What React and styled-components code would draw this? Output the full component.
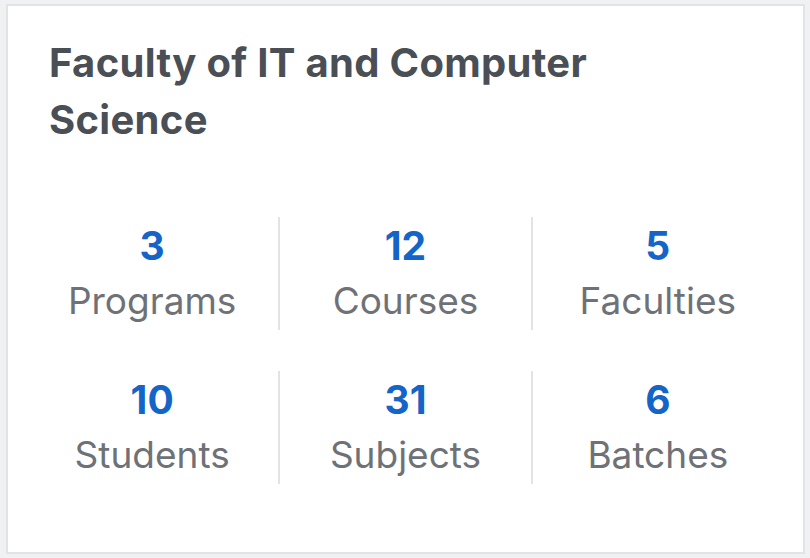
import styled, { createGlobalStyle } from "styled-components";

const GlobalStyle = createGlobalStyle`
  html, body {
    margin: 0;
    padding: 0;
    background: #eff1f3;
  }
  body {
    font-family: Inter, "Noto Sans", sans-serif;
  }
`;

const Page = styled.div`
  width: 810px;
  height: 558px;
  box-sizing: border-box;
  padding: 4px 5px 4px 6px;
`;

const Card = styled.div`
  height: 100%;
  box-sizing: border-box;
  background: #fff;
  border: 2px solid #e0e3e7;
  padding: 28px 20px 0 18px;
`;

const Title = styled.h2`
  margin: 0 0 0 23px;
  font-size: 40px;
  line-height: 57px;
  font-weight: 700;
  letter-spacing: 0.3px;
  color: #4a4f56;
  max-width: 600px;
`;

const StatsGrid = styled.div`
  display: grid;
  grid-template-columns: repeat(3, 1fr);
  row-gap: 41px;
  margin-top: 69px;
`;

const Stat = styled.div`
  display: flex;
  flex-direction: column;
  align-items: center;
  height: 113px;
  border-left: ${(p) => (p.$first ? "none" : "2px solid #e1e3e7")};
`;

const Value = styled.div`
  margin-top: 6px;
  font-size: 39px;
  line-height: 46px;
  font-weight: 700;
  color: #1565c8;
`;

const Label = styled.div`
  margin-top: 10px;
  font-size: 37px;
  line-height: 44px;
  color: #6e7277;
`;

const stats = [
  { value: 3, label: "Programs" },
  { value: 12, label: "Courses" },
  { value: 5, label: "Faculties" },
  { value: 10, label: "Students" },
  { value: 31, label: "Subjects" },
  { value: 6, label: "Batches" },
];

export default function App() {
  return (
    <>
      <GlobalStyle />
      <Page>
        <Card>
          <Title>Faculty of IT and Computer Science</Title>
          <StatsGrid>
            {stats.map((s, i) => (
              <Stat key={s.label} $first={i % 3 === 0}>
                <Value>{s.value}</Value>
                <Label>{s.label}</Label>
              </Stat>
            ))}
          </StatsGrid>
        </Card>
      </Page>
    </>
  );
}
